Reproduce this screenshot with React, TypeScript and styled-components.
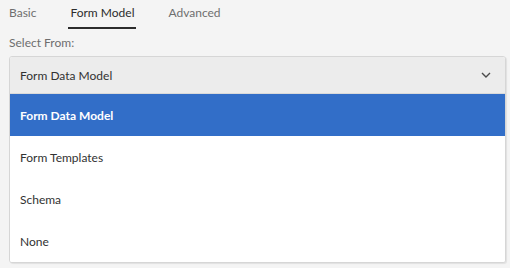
import React, { useState } from "react";
import styled, { createGlobalStyle } from "styled-components";

const GlobalStyle = createGlobalStyle`
  html, body {
    margin: 0;
    padding: 0;
    background: #f4f4f4;
    font-family: Lato, "Open Sans", "Liberation Sans", sans-serif;
  }
`;

const Page = styled.div`
  width: 510px;
  height: 268px;
  padding: 0 5px 0 9px;
  box-sizing: border-box;
  overflow: hidden;
`;

const Tabs = styled.div`
  display: flex;
  gap: 34px;
  height: 30px;
`;

const Tab = styled.div<{ $active?: boolean }>`
  position: relative;
  font-size: 12px;
  line-height: 25px;
  color: ${(p) => (p.$active ? "#2c2c2c" : "#6f6f6f")};
  &::after {
    content: "";
    display: ${(p) => (p.$active ? "block" : "none")};
    position: absolute;
    left: -2px;
    right: -2px;
    top: 27px;
    height: 2px;
    background: #2c2c2c;
  }
`;

const Label = styled.div`
  font-size: 12px;
  line-height: 26px;
  color: #6e6e6e;
`;

const Select = styled.div`
  width: 495px;
  border: 1px solid #d6d6d6;
  border-radius: 3px;
  background: #fff;
  box-shadow: 1px 1px 1px rgba(0, 0, 0, 0.08);
  overflow: hidden;
`;

const Trigger = styled.div`
  display: flex;
  align-items: center;
  justify-content: space-between;
  height: 36px;
  padding: 0 14px 0 10px;
  background: #ececec;
  border-bottom: 1px solid #dadada;
  font-size: 12px;
  color: #323232;
`;

const Option = styled.div<{ $selected?: boolean }>`
  height: 42px;
  display: flex;
  align-items: center;
  padding-left: 10px;
  font-size: 12px;
  font-weight: ${(p) => (p.$selected ? 700 : 400)};
  color: ${(p) => (p.$selected ? "#fff" : "#323232")};
  background: ${(p) => (p.$selected ? "#326ec8" : "#fff")};
`;

const options = ["Form Data Model", "Form Templates", "Schema", "None"];

export default function App() {
  const [value, setValue] = useState("Form Data Model");
  return (
    <Page>
      <GlobalStyle />
      <Tabs>
        <Tab>Basic</Tab>
        <Tab $active>Form Model</Tab>
        <Tab>Advanced</Tab>
      </Tabs>
      <Label>Select From:</Label>
      <Select>
        <Trigger>
          {value}
          <svg width="10" height="6" viewBox="0 0 10 6">
            <path d="M1 1l4 4 4-4" fill="none" stroke="#4b4b4b" strokeWidth="1.4" />
          </svg>
        </Trigger>
        {options.map((o) => (
          <Option key={o} $selected={o === value} onClick={() => setValue(o)}>
            {o}
          </Option>
        ))}
      </Select>
    </Page>
  );
}
